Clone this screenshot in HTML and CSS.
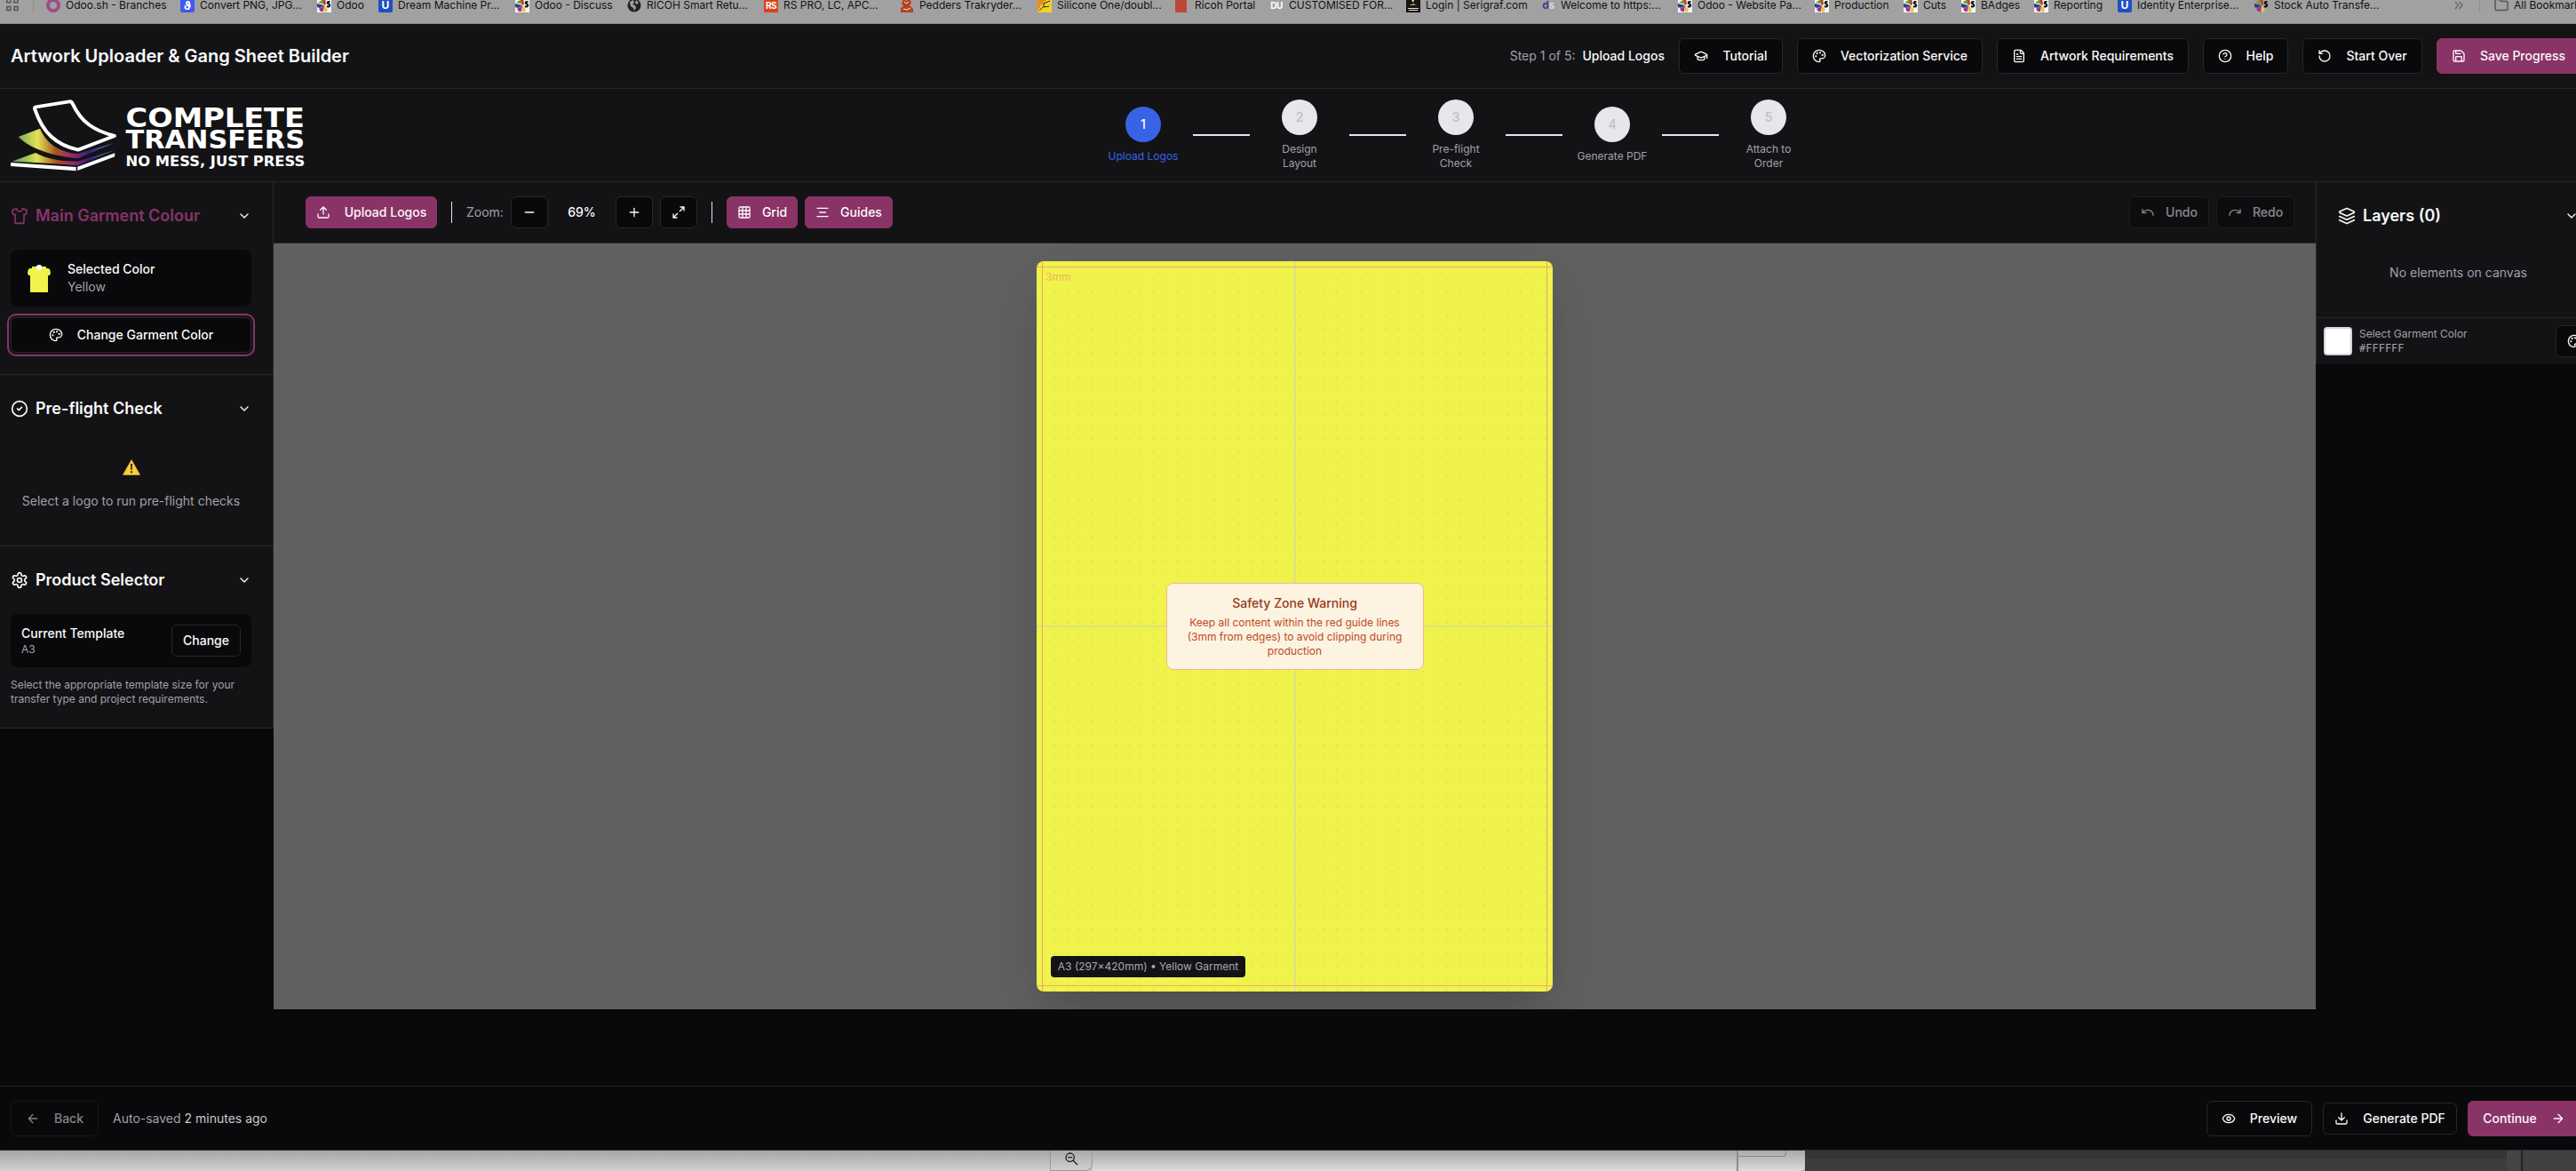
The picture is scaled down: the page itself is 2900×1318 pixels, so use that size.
FILE: index.html
```html
<!DOCTYPE html>
<html lang="en">
<head>
<meta charset="utf-8">
<title>Artwork Uploader &amp; Gang Sheet Builder</title>
<link rel="stylesheet" href="styles.css">
</head>
<body>
<svg class="sprite" aria-hidden="true">
  <symbol id="upload" viewBox="0 0 24 24"><path d="M21 15v4a2 2 0 0 1-2 2H5a2 2 0 0 1-2-2v-4M17 8l-5-5-5 5M12 3v12"/></symbol>
  <symbol id="download" viewBox="0 0 24 24"><path d="M21 15v4a2 2 0 0 1-2 2H5a2 2 0 0 1-2-2v-4M7 10l5 5 5-5M12 15V3"/></symbol>
  <symbol id="cap" viewBox="0 0 24 24"><path d="M21.42 10.922a1 1 0 0 0-.019-1.838L12.83 5.18a2 2 0 0 0-1.66 0L2.6 9.08a1 1 0 0 0 0 1.832l8.57 3.908a2 2 0 0 0 1.66 0zM22 10v6M6 12.5V16a6 3 0 0 0 12 0v-3.5"/></symbol>
  <symbol id="palette" viewBox="0 0 24 24"><circle cx="13.5" cy="6.5" r=".7"/><circle cx="17.5" cy="10.5" r=".7"/><circle cx="8.5" cy="7.5" r=".7"/><circle cx="6.5" cy="12.5" r=".7"/><path d="M12 2C6.5 2 2 6.5 2 12s4.5 10 10 10c.926 0 1.648-.746 1.648-1.688 0-.437-.18-.835-.437-1.125-.29-.289-.438-.652-.438-1.125a1.64 1.64 0 0 1 1.668-1.668h1.996c3.051 0 5.555-2.503 5.555-5.554C21.965 6.012 17.461 2 12 2z"/></symbol>
  <symbol id="file" viewBox="0 0 24 24"><path d="M15 2H6a2 2 0 0 0-2 2v16a2 2 0 0 0 2 2h12a2 2 0 0 0 2-2V7ZM14 2v4a2 2 0 0 0 2 2h4M10 9H8M16 13H8M16 17H8"/></symbol>
  <symbol id="help" viewBox="0 0 24 24"><circle cx="12" cy="12" r="10"/><path d="M9.09 9a3 3 0 0 1 5.83 1c0 2-3 3-3 3M12 17h.01"/></symbol>
  <symbol id="rotate" viewBox="0 0 24 24"><path d="M3 12a9 9 0 1 0 9-9 9.75 9.75 0 0 0-6.74 2.74L3 8M3 3v5h5"/></symbol>
  <symbol id="save" viewBox="0 0 24 24"><path d="M15.2 3a2 2 0 0 1 1.4.6l3.8 3.8a2 2 0 0 1 .6 1.4V19a2 2 0 0 1-2 2H5a2 2 0 0 1-2-2V5a2 2 0 0 1 2-2zM17 21v-7a1 1 0 0 0-1-1H8a1 1 0 0 0-1 1v7M7 3v4a1 1 0 0 0 1 1h7"/></symbol>
  <symbol id="shirt" viewBox="0 0 24 24"><path d="M20.38 3.46 16 2a4 4 0 0 1-8 0L3.62 3.46a2 2 0 0 0-1.34 2.23l.58 3.47a1 1 0 0 0 .99.84H6v10c0 1.1.9 2 2 2h8a2 2 0 0 0 2-2V10h2.15a1 1 0 0 0 .99-.84l.58-3.47a2 2 0 0 0-1.34-2.23z"/></symbol>
  <symbol id="check" viewBox="0 0 24 24"><circle cx="12" cy="12" r="10"/><path d="m9 12 2 2 4-4"/></symbol>
  <symbol id="gear" viewBox="0 0 24 24"><path d="M12.22 2h-.44a2 2 0 0 0-2 2v.18a2 2 0 0 1-1 1.73l-.43.25a2 2 0 0 1-2 0l-.15-.08a2 2 0 0 0-2.73.73l-.22.38a2 2 0 0 0 .73 2.73l.15.1a2 2 0 0 1 1 1.72v.51a2 2 0 0 1-1 1.74l-.15.09a2 2 0 0 0-.73 2.73l.22.38a2 2 0 0 0 2.73.73l.15-.08a2 2 0 0 1 2 0l.43.25a2 2 0 0 1 1 1.73V20a2 2 0 0 0 2 2h.44a2 2 0 0 0 2-2v-.18a2 2 0 0 1 1-1.73l.43-.25a2 2 0 0 1 2 0l.15.08a2 2 0 0 0 2.73-.73l.22-.39a2 2 0 0 0-.73-2.73l-.15-.08a2 2 0 0 1-1-1.74v-.5a2 2 0 0 1 1-1.74l.15-.09a2 2 0 0 0 .73-2.73l-.22-.38a2 2 0 0 0-2.73-.73l-.15.08a2 2 0 0 1-2 0l-.43-.25a2 2 0 0 1-1-1.73V4a2 2 0 0 0-2-2z"/><circle cx="12" cy="12" r="3"/></symbol>
  <symbol id="layers" viewBox="0 0 24 24"><path d="M12.83 2.18a2 2 0 0 0-1.66 0L2.6 6.08a1 1 0 0 0 0 1.83l8.58 3.91a2 2 0 0 0 1.66 0l8.58-3.9a1 1 0 0 0 0-1.83ZM22 17.65l-9.17 4.16a2 2 0 0 1-1.66 0L2 17.65M22 12.65l-9.17 4.16a2 2 0 0 1-1.66 0L2 12.65"/></symbol>
  <symbol id="chevron" viewBox="0 0 24 24"><path d="m6 9 6 6 6-6"/></symbol>
  <symbol id="minus" viewBox="0 0 24 24"><path d="M5 12h14"/></symbol>
  <symbol id="plus" viewBox="0 0 24 24"><path d="M5 12h14M12 5v14"/></symbol>
  <symbol id="expand" viewBox="0 0 24 24"><path d="M15 3h6v6M9 21H3v-6M21 3l-7 7M3 21l7-7"/></symbol>
  <symbol id="grid" viewBox="0 0 24 24"><rect x="3" y="3" width="18" height="18" rx="2"/><path d="M3 9h18M3 15h18M9 3v18M15 3v18"/></symbol>
  <symbol id="guides" viewBox="0 0 24 24"><path d="M21 5H3M17 12H7M21 19H3"/></symbol>
  <symbol id="undo" viewBox="0 0 24 24"><path d="M3 7v6h6M21 17a9 9 0 0 0-9-9 9 9 0 0 0-6 2.3L3 13"/></symbol>
  <symbol id="redo" viewBox="0 0 24 24"><path d="M21 7v6h-6M3 17a9 9 0 0 1 9-9 9 9 0 0 1 6 2.3l3 2.7"/></symbol>
  <symbol id="eye" viewBox="0 0 24 24"><path d="M2.062 12.348a1 1 0 0 1 0-.696 10.75 10.75 0 0 1 19.876 0 1 1 0 0 1 0 .696 10.75 10.75 0 0 1-19.876 0"/><circle cx="12" cy="12" r="3"/></symbol>
  <symbol id="left" viewBox="0 0 24 24"><path d="m12 19-7-7 7-7M19 12H5"/></symbol>
  <symbol id="right" viewBox="0 0 24 24"><path d="M5 12h14M12 5l7 7-7 7"/></symbol>
  <symbol id="zoomout" viewBox="0 0 24 24"><circle cx="10" cy="10" r="7"/><path d="M15 15l7 7M7 10h6"/></symbol>
  <symbol id="petals" viewBox="0 0 16 16"><path fill="#7a9c2c" d="M1 5 7 1l2 6z"/><path fill="#c33a2c" d="M6 0h3l1 7-2 1z"/><path fill="#27408f" d="M0 6l8 2-5 3-3-1z"/><path fill="#a3357c" d="M2 12l6-4-1 7-3 0z"/><path fill="#e2c93b" d="M8 8l4 5-2 3-2-1z"/><path fill="none" stroke="#111" stroke-width="2" d="M14.5 4.5C12 3 10.500 5.500 13 6.500S14 10.500 11 9"/></symbol>
</svg>

<nav class="bookmarks">
  <svg class="apps" viewBox="0 0 14 15"><path fill="none" stroke="#555" stroke-width="1.500" d="M.8.8h4v4h-4zM9 .8h4v4H9zM.8 9.500h4v4h-4zM9 9.500h4v4H9z"/></svg>
  <i class="bar"></i>
  <div class="bm"><b class="fav ring"></b><span>Odoo.sh - Branches</span></div>
  <div class="bm"><b class="fav vee">ϑ</b><span>Convert PNG, JPG...</span></div>
  <div class="bm"><svg class="fav white"><use href="#petals"/></svg><span>Odoo</span></div>
  <div class="bm"><b class="fav dream">U</b><span>Dream Machine Pr...</span></div>
  <div class="bm"><svg class="fav white"><use href="#petals"/></svg><span>Odoo - Discuss</span></div>
  <div class="bm"><svg class="fav" viewBox="0 0 16 16"><circle cx="8" cy="8" r="7.500" fill="#222"/><path fill="#a1a1a1" d="M3 4l4-2 1 3-2 2 3 1 1 3-2 3-1-3-3-2zM10 2l3 3-2 2-2-2z"/></svg><span>RICOH Smart Retu...</span></div>
  <div class="bm"><b class="fav rs">RS</b><span>RS PRO, LC, APC...</span></div>
  <div class="bm"><svg class="fav" viewBox="0 0 16 16"><path fill="#b8401f" d="M4 1l3 2 4-3 2 5-2 3 4 4v4H1v-5l3-2-2-3z"/><path stroke="#eee" fill="none" d="M5 4l2 2 3-2M4 12l4 1 4-2"/></svg><span>Pedders Trakryder...</span></div>
  <div class="bm"><svg class="fav" viewBox="0 0 16 16"><path fill="#f5d327" d="M0 0h16v16H0z"/><path fill="#e88c1a" d="M0 0h12L3 9l-3 7z"/><path fill="none" stroke="#222" d="M14 3 7 6v4l6-1M7 9l-5 5"/></svg><span>Silicone One/doubl...</span></div>
  <div class="bm"><b class="fav red"></b><span>Ricoh Portal</span></div>
  <div class="bm"><b class="fav du">DU</b><span>CUSTOMISED FOR...</span></div>
  <div class="bm"><svg class="fav" viewBox="0 0 16 16"><path fill="#151515" d="M0 0h16v16H0z"/><path fill="#ddd" d="M6 2l3 0-1 3zM2 11h12v1H2zM3 13h10v1H3z"/><path fill="#c8b030" d="M3 8l6-2 0 2z"/><path fill="#b03a30" d="M9 6l4 2H9z"/></svg><span>Login | Serigraf.com</span></div>
  <div class="bm"><b class="fav ds">d<em>s</em></b><span>Welcome to https:...</span></div>
  <div class="bm"><svg class="fav white"><use href="#petals"/></svg><span>Odoo - Website Pa...</span></div>
  <div class="bm"><svg class="fav white"><use href="#petals"/></svg><span>Production</span></div>
  <div class="bm"><svg class="fav white"><use href="#petals"/></svg><span>Cuts</span></div>
  <div class="bm"><svg class="fav white"><use href="#petals"/></svg><span>BAdges</span></div>
  <div class="bm"><svg class="fav white"><use href="#petals"/></svg><span>Reporting</span></div>
  <div class="bm"><b class="fav dream">U</b><span>Identity Enterprise...</span></div>
  <div class="bm"><svg class="fav"><use href="#petals"/></svg><span>Stock Auto Transfe...</span></div>
  <svg class="more" viewBox="0 0 10 8"><path fill="none" stroke="#666" stroke-width="1.300" d="M1 0l3.500 4L1 8M5.500 0 9 4 5.500 8"/></svg>
  <i class="bar"></i>
  <div class="bm"><svg class="fav" viewBox="0 0 16 16"><path fill="none" stroke="#555" stroke-width="1.500" d="M1 12.500v-10l1-1h4l1.500 2H14l1 1v8l-1 1H2z"/></svg><span>All Bookmarks</span></div>
</nav>

<div class="app">
  <header class="header">
    <h1>Artwork Uploader &amp; Gang Sheet Builder</h1>
    <div class="header-actions">
      <p class="stepinfo"><span>Step 1 of 5:</span><strong>Upload Logos</strong></p>
      <button class="btn w117"><svg><use href="#cap"/></svg><span>Tutorial</span></button>
      <button class="btn w209"><svg><use href="#palette"/></svg><span>Vectorization Service</span></button>
      <button class="btn w216"><svg><use href="#file"/></svg><span>Artwork Requirements</span></button>
      <button class="btn w96"><svg><use href="#help"/></svg><span>Help</span></button>
      <button class="btn w135"><svg><use href="#rotate"/></svg><span>Start Over</span></button>
      <button class="btn primary w162"><svg><use href="#save"/></svg><span>Save Progress</span></button>
    </div>
  </header>

  <div class="progress">
    <svg class="logo" viewBox="36 36 1000 240">
      <defs><linearGradient id="spectrum" gradientUnits="userSpaceOnUse" x1="45" y1="0" x2="386" y2="0"><stop offset="0" stop-color="#5d9f5c"/><stop offset=".24" stop-color="#e3e255"/><stop offset=".42" stop-color="#a8571f"/><stop offset=".58" stop-color="#9a2670"/><stop offset=".75" stop-color="#35217a"/><stop offset="1" stop-color="#4c86c6"/></linearGradient></defs>
      <path fill="url(#spectrum)" d="M62 162 135 134C160 190 205 214 262 219L384 183 264 235C170 226 100 200 62 162zM40 245 120 216C165 240 215 245 262 245L387 207 262 259C185 252 110 248 40 245z"/>
      <path fill="#fff" d="M36 249 257 264v13L36 261zM262 263l126-46v12l-126 47z"/>
      <path fill="#131316" stroke="#fff" stroke-width="12" stroke-linejoin="round" d="M117 66 Q117 62 122 61L234 43Q242 42 246 51C275 112 315 140 387 159L264 206C190 190 145 150 117 66z"/>
      <g class="wordmark"><text x="425" y="129" font-size="93" textLength="605" lengthAdjust="spacingAndGlyphs">COMPLETE</text><text x="425" y="202" font-size="83" textLength="605" lengthAdjust="spacingAndGlyphs">TRANSFERS</text><text x="425" y="262" font-size="46" textLength="606" lengthAdjust="spacingAndGlyphs">NO MESS, JUST PRESS</text></g>
    </svg>
    <ol class="steps">
      <li class="step active"><b>1</b><span>Upload Logos</span></li>
      <li class="line"></li>
      <li class="step"><b>2</b><span>Design<br>Layout</span></li>
      <li class="line"></li>
      <li class="step"><b>3</b><span>Pre-flight<br>Check</span></li>
      <li class="line"></li>
      <li class="step"><b>4</b><span>Generate PDF</span></li>
      <li class="line"></li>
      <li class="step"><b>5</b><span>Attach to<br>Order</span></li>
    </ol>
  </div>

  <div class="workspace">
    <aside class="sidebar">
      <section>
        <h2 class="accent"><svg><use href="#shirt"/></svg><span>Main Garment Colour</span><svg class="chev"><use href="#chevron"/></svg></h2>
        <div class="card color-card">
          <svg class="tee" viewBox="0 0 26 31"><path fill="#eff34b" d="M5 2h5l3 3 3-3h5v2h2l2 1 1 4-1 3h-2v19H3V12H1L0 9l1-4 2-1h2z"/><ellipse cx="13" cy="3" rx="3.300" ry="3" fill="#fff"/></svg>
          <div><p class="strong">Selected Color</p><p class="muted">Yellow</p></div>
        </div>
        <button class="btn wide ring-focus"><svg><use href="#palette"/></svg><span>Change Garment Color</span></button>
      </section>
      <section>
        <h2><svg><use href="#check"/></svg><span>Pre-flight Check</span><svg class="chev"><use href="#chevron"/></svg></h2>
        <div class="empty">
          <svg class="warn" viewBox="0 0 20 18"><path fill="#f9cf3a" stroke="#e9b52c" stroke-width=".6" stroke-linejoin="round" d="M10 .6 19.600 17.400H.4z"/><path fill="#2b2412" d="M9 5h2l-.3 7H9.300zM9 13.300h2v2H9z"/></svg>
          <p>Select a logo to run pre-flight checks</p>
        </div>
      </section>
      <section>
        <h2><svg><use href="#gear"/></svg><span>Product Selector</span><svg class="chev"><use href="#chevron"/></svg></h2>
        <div class="card template-card">
          <div><p class="strong">Current Template</p><p class="small">A3</p></div>
          <button class="btn sm w78"><span>Change</span></button>
        </div>
        <p class="small note">Select the appropriate template size for your<br>transfer type and project requirements.</p>
      </section>
    </aside>

    <main class="stage">
      <div class="toolbar">
        <button class="btn sm primary w148"><svg><use href="#upload"/></svg><span>Upload Logos</span></button>
        <i class="sep"></i>
        <span class="zoomlabel">Zoom:</span>
        <button class="btn sm w42"><svg><use href="#minus"/></svg></button>
        <span class="zoomvalue">69%</span>
        <button class="btn sm w42"><svg><use href="#plus"/></svg></button>
        <button class="btn sm w42 fit"><svg><use href="#expand"/></svg></button>
        <i class="sep"></i>
        <button class="btn sm primary tight w80"><svg><use href="#grid"/></svg><span>Grid</span></button>
        <button class="btn sm primary tight w99"><svg><use href="#guides"/></svg><span>Guides</span></button>
        <div class="history">
          <button class="btn sm tight w90" disabled><svg><use href="#undo"/></svg><span>Undo</span></button>
          <button class="btn sm tight w88" disabled><svg><use href="#redo"/></svg><span>Redo</span></button>
        </div>
      </div>
      <div class="canvas">
        <div class="sheet">
          <i class="guide center-v"></i><i class="guide center-h"></i>
          <i class="safe top"></i><i class="safe bottom"></i><i class="safe left"></i><i class="safe right"></i>
          <span class="mm">3mm</span>
          <div class="warning"><h3>Safety Zone Warning</h3><p>Keep all content within the red guide lines<br>(3mm from edges) to avoid clipping during<br>production</p></div>
          <span class="size">A3 (297×420mm) • Yellow Garment</span>
        </div>
      </div>
    </main>

    <aside class="layers">
      <section>
        <h2><svg><use href="#layers"/></svg><span>Layers (0)</span><svg class="chev"><use href="#chevron"/></svg></h2>
        <p class="none">No elements on canvas</p>
      </section>
      <div class="garment">
        <i class="swatch"></i>
        <div><p class="small">Select Garment Color</p><p class="small mono">#FFFFFF</p></div>
        <button class="btn sm w42"><svg><use href="#palette"/></svg></button>
      </div>
    </aside>
  </div>

  <footer class="footer">
    <button class="btn w99" disabled><svg><use href="#left"/></svg><span>Back</span></button>
    <p class="saved"><span>Auto-saved</span> 2 minutes ago</p>
    <div class="footer-actions">
      <button class="btn w119"><svg><use href="#eye"/></svg><span>Preview</span></button>
      <button class="btn sm w151"><svg><use href="#download"/></svg><span>Generate PDF</span></button>
      <button class="btn primary w127"><span>Continue</span><svg><use href="#right"/></svg></button>
    </div>
  </footer>
</div>

<div class="desktop">
  <div class="page-left"></div>
  <div class="zoomchip"><svg><use href="#zoomout"/></svg></div>
  <div class="page-mid"></div>
  <div class="page-tab"><i></i></div>
  <div class="dark-panel"></div>
  <div class="dark-scroll"></div>
  <div class="dark-edge"></div>
</div>
</body>
</html>
```
FILE: styles.css
```css
* { box-sizing: border-box; margin: 0; padding: 0; }
body { width: 2900px; height: 1318px; overflow: hidden; background: #09090b; color: #fafafa; font: 14px/20px Inter, sans-serif; }
svg { display: block; flex: none; overflow: visible; }
.sprite { position: absolute; width: 0; height: 0; }
i, em { font-style: normal; }

.bookmarks { height: 27px; overflow: hidden; background: #a1a1a1; border-bottom: 1px solid #8b8b8b; color: #111; font-size: 12px; line-height: 16px; white-space: nowrap; display: grid; grid-template-columns: 30px 15px 151px 154px 69px 154px 126px 154px 153px 155px 155px 106px 154px 152px 154px 154px 100px 65px 82px 94px 154px 225px 28px 17px 120px; padding-left: 7px; align-items: start; }
.bm { display: flex; gap: 6px; align-items: center; height: 16px; margin-top: -2px; }
.bar { width: 1px; height: 14px; background: #8e8e8e; }
.apps { width: 14px; height: 15px; margin-top: -2px; }
.more { width: 10px; height: 8px; margin-top: 2px; }
.fav { width: 16px; height: 16px; flex: none; text-align: center; color: #fff; line-height: 16px; font-weight: 700; }
.ring { border: 4px solid #9c4d8b; border-radius: 50%; }
.vee { background: #3f5af0; border-radius: 2px; font-size: 13px; }
.white { background: #f5f5f5; }
.dream { background: #1f4fc4; border-radius: 2px; font-size: 12px; }
.rs { background: #d8431f; font-size: 10px; letter-spacing: -.5px; }
.red { background: #bf4637; width: 13px; margin-right: 3px; }
.du { font-size: 10px; letter-spacing: -.5px; }
.ds { color: #4b3a88; font-size: 12px; letter-spacing: -.5px; }
.ds em { color: #ddd; }

.app { width: 2917px; height: 1268px; border-bottom: 1px solid #2c2c2e; display: flex; flex-direction: column; }
.header { height: 73px; flex: none; background: #131316; border-bottom: 1px solid #27272a; padding: 0 12px; display: flex; align-items: center; justify-content: space-between; }
h1 { font-size: 20px; line-height: 28px; font-weight: 600; white-space: nowrap; }
.header-actions { display: flex; align-items: center; gap: 16px; }
.stepinfo { display: flex; gap: 8px; color: #a1a1aa; }
.stepinfo strong { font-weight: 500; color: #fafafa; }
.btn { height: 40px; flex: none; background: #09090b; border: 1px solid #27272a; border-radius: 6px; color: #fafafa; font: 500 14px/20px Inter, sans-serif; display: flex; align-items: center; justify-content: center; gap: 16px; white-space: nowrap; }
.btn svg, .chev, .zoomchip svg { width: 16px; height: 16px; }
.btn svg, h2 svg, .zoomchip svg { fill: none; stroke: currentColor; stroke-width: 2; stroke-linecap: round; stroke-linejoin: round; }
.btn.sm { height: 36px; }
.btn.primary { background: #8a3367; border-color: #8a3367; }
.btn.tight { gap: 12px; }
.btn:disabled { opacity: .5; }
.w42 { width: 42px; } .w78 { width: 78px; } .w80 { width: 80px; } .w88 { width: 88px; } .w90 { width: 90px; } .w96 { width: 96px; } .w99 { width: 99px; }
.w117 { width: 117px; } .w119 { width: 119px; } .w127 { width: 127px; } .w135 { width: 135px; } .w148 { width: 148px; } .w151 { width: 151px; } .w162 { width: 162px; }
.w209 { width: 209px; } .w216 { width: 216px; }

.progress { height: 105px; flex: none; background: #131316; border-bottom: 1px solid #27272a; padding: 0 12px; display: flex; align-items: center; }
.logo { width: 333px; height: 80px; }
.wordmark { fill: #fff; font-family: "DejaVu Sans", sans-serif; font-weight: 700; }
.steps { list-style: none; display: flex; align-items: center; gap: 8px; margin-left: 894px; }
.step { width: 96px; display: flex; flex-direction: column; align-items: center; gap: 8px; color: #a1a1aa; font-size: 12px; line-height: 16px; text-align: center; }
.step b { width: 40px; height: 40px; border-radius: 50%; background: #e5e7eb; color: #bdbdc2; font-size: 14px; line-height: 40px; font-weight: 500; }
.step.active { color: #3863e6; }
.step.active b { background: #3863e6; color: #fff; }
.line { width: 64px; height: 2px; background: #e5e7eb; }

.workspace { height: 1017px; flex: none; display: flex; align-items: flex-start; }
.sidebar { width: 308px; flex: none; background: #131316; border-right: 1px solid #27272a; }
.sidebar section { padding: 24px 24px 24px 12px; border-bottom: 1px solid #27272a; }
h2 { height: 28px; margin-bottom: 24px; display: flex; align-items: center; gap: 8px; font-size: 18px; line-height: 28px; font-weight: 600; white-space: nowrap; }
h2 svg { width: 20px; height: 20px; }
h2 .chev { width: 16px; height: 16px; margin-left: auto; color: #fafafa; }
h2.accent { color: #8a3367; }
.card { background: #09090b; border-radius: 8px; display: flex; align-items: center; }
.color-card { height: 64px; padding-left: 19px; gap: 19px; }
.tee { width: 26px; height: 31px; }
.strong { font-weight: 500; }
.muted { color: #a1a1aa; }
.small { font-size: 12px; line-height: 16px; color: #a1a1aa; white-space: nowrap; }
.wide { width: 100%; margin-top: 12px; }
.ring-focus { box-shadow: 0 0 0 2px #131316, 0 0 0 4px #8a3367; }
.empty { height: 92px; display: flex; flex-direction: column; align-items: center; padding-top: 19px; gap: 19px; color: #a1a1aa; white-space: nowrap; }
.warn { width: 20px; height: 18px; }
.template-card { height: 60px; padding: 0 12px; justify-content: space-between; }
.note { margin-top: 12px; }

.stage { width: 2299px; flex: none; }
.toolbar { height: 69px; background: #131316; border-bottom: 1px solid #27272a; padding: 0 24px 0 36px; display: flex; align-items: center; }
.sep { width: 1px; height: 24px; margin: 0 16px; background: #e5e7eb; }
.zoomlabel { width: 50px; color: #a1a1aa; }
.zoomvalue { width: 76px; text-align: center; font-weight: 500; }
.fit { margin-left: 8px; }
.w80 { margin-right: 8px; }
.history { margin-left: auto; display: flex; gap: 8px; }
.canvas { height: 862px; background: #606060; display: flex; align-items: center; justify-content: center; overflow: hidden; }
.sheet { position: relative; width: 581px; height: 822px; border-radius: 8px; background: radial-gradient(circle, #dfe35c .7px, transparent 1.300px) 0 0 / 13.800px 13.800px #eff34b; box-shadow: 0 25px 50px -12px rgba(0,0,0,.25); display: flex; align-items: center; justify-content: center; }
.guide, .safe { position: absolute; }
.guide { background: rgba(200,210,200,.5); }
.center-v { left: 290px; top: 0; width: 2px; height: 100%; }
.center-h { top: 410px; left: 0; height: 2px; width: 100%; }
.safe { background: #f0a866; }
.top, .bottom { left: 0; width: 100%; height: 1px; }
.left, .right { top: 0; height: 100%; width: 1px; }
.top { top: 6px; } .bottom { bottom: 6px; } .left { left: 6px; } .right { right: 6px; }
.mm { position: absolute; left: 10px; top: 10px; font-size: 12px; line-height: 16px; color: #f0b35f; }
.warning { position: relative; width: 290px; height: 98px; padding-top: 12px; background: #fdf3e1; border: 1px solid #f3b795; border-radius: 8px; text-align: center; color: #bb4a25; font-size: 12px; line-height: 16px; }
.warning h3 { font-size: 14px; line-height: 20px; font-weight: 500; color: #96391b; margin-bottom: 4px; }
.size { position: absolute; left: 16px; bottom: 16px; width: 219px; height: 24px; border-radius: 4px; background: #131316; color: #a9a9b0; font-size: 12px; line-height: 24px; text-align: center; white-space: nowrap; }

.layers { width: 320px; flex: none; background: #131316; border-left: 1px solid #27272a; }
.layers section { height: 153px; padding: 24px 24px 0 24px; border-bottom: 1px solid #27272a; }
.layers section h2 { margin-bottom: 40px; }
.none { color: #a1a1aa; text-align: center; }
.garment { height: 52px; padding: 0 8px; display: flex; align-items: center; gap: 8px; }
.swatch { width: 32px; height: 32px; border-radius: 4px; border: 2px solid #d1d5db; background: #fff; }
.garment .btn { margin-left: auto; }
.mono { font-family: "DejaVu Sans Mono", monospace; }

.footer { height: 72px; flex: none; border-top: 1px solid #27272a; padding: 0 12px; display: flex; align-items: center; }
.saved { margin-left: 16px; color: #c8c8cc; }
.saved span { color: #a1a1aa; }
.footer-actions { margin-left: auto; display: flex; align-items: center; gap: 12px; }

.desktop { height: 23px; display: flex; background: #c4c4c4; overflow: hidden; }
.page-left { width: 1182px; background: linear-gradient(#a5a5a5, #d2d2d2); }
.zoomchip { width: 48px; display: flex; justify-content: center; padding-top: 1px; background: linear-gradient(#aaa, #d0d0d0); border: 1px solid #999; border-top: 0; border-radius: 0 0 8px 0; color: #222; }
.page-mid { width: 727px; background: linear-gradient(#a5a5a5, #dcdcdc); border-right: 2px solid #8d8d8d; }
.page-tab { width: 75px; background: linear-gradient(#a9a9a9, #dcdcdc); border-radius: 0 0 8px 0; }
.page-tab i { display: block; width: 54px; height: 7px; border: 1px solid #888; border-width: 0 1px 1px 0; border-radius: 0 0 4px 0; }
.dark-panel { width: 790px; background: linear-gradient(#343434 9px, #3c3c3c 9px); }
.dark-scroll { width: 18px; background: #444; border-right: 2px solid #222; }
.dark-edge { flex: 1; background: #404040; }
```
